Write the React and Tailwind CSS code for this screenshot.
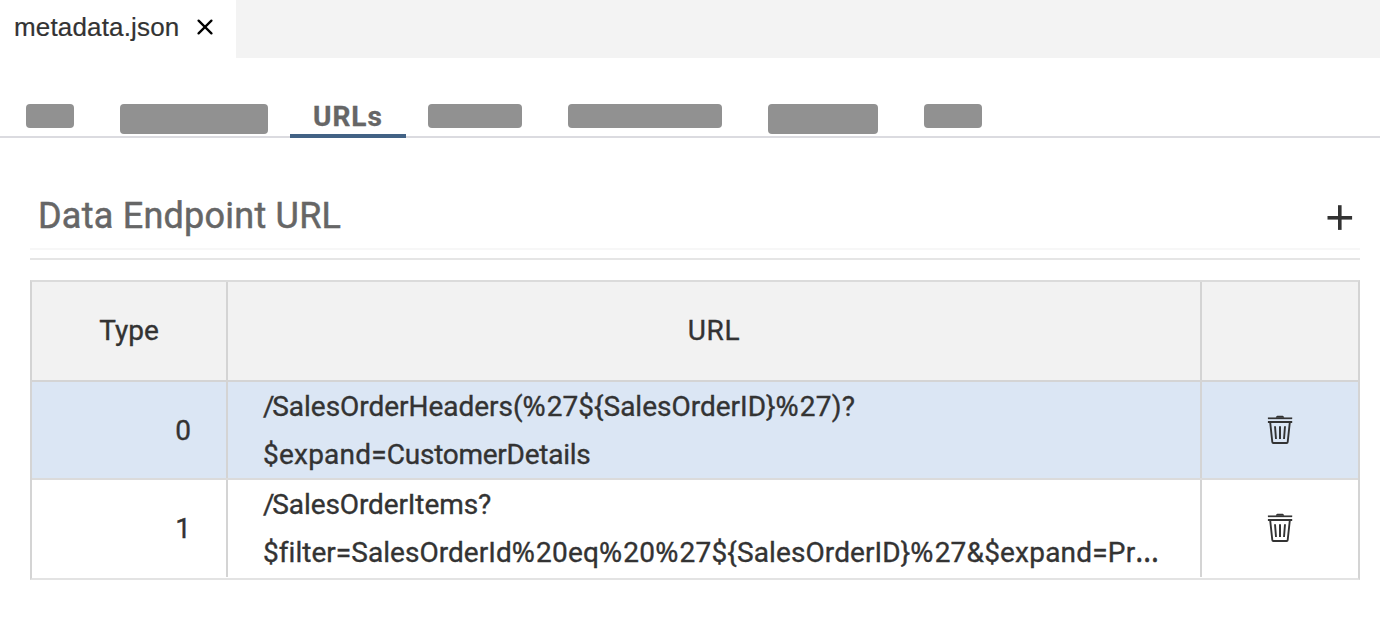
import React from "react";

const percent = { text: "%", cls: "font-['Noto_Sans',sans-serif] leading-none tracking-[1px]" };

const rows = [
  {
    type: "0",
    selected: true,
    lines: [
      [
        { text: "/", cls: "tracking-[-2.3px]" },
        { text: "SalesOrderHeaders(", cls: "tracking-[-0.03px]" },
        percent,
        { text: "27${" },
        { text: "SalesOrderID}", cls: "tracking-[0px]" },
        percent,
        { text: "27)?", cls: "tracking-[0.2px]" },
      ],
      [
        { text: "$expand=", cls: "tracking-[0.22px]" },
        { text: "CustomerDetails", cls: "tracking-[-0.26px]" },
      ],
    ],
  },
  {
    type: "1",
    selected: false,
    lines: [
      [
        { text: "/", cls: "tracking-[-2.3px]" },
        { text: "SalesOrderItems?", cls: "tracking-[-0.1px]" },
      ],
      [
        { text: "$filter=SalesOrderId", cls: "tracking-[0.04px]" },
        percent,
        { text: "20eq", cls: "tracking-[0.2px]" },
        percent,
        { text: "20", cls: "tracking-[0.2px]" },
        percent,
        { text: "27${", cls: "tracking-[0.2px]" },
        { text: "SalesOrderID}", cls: "tracking-[0.1px]" },
        percent,
        { text: "27&$expand=Pr", cls: "tracking-[0.2px]" },
        { text: "…", cls: "font-['Noto_Sans',sans-serif] text-[30px] leading-none" },
      ],
    ],
  },
];

function CloseIcon() {
  return (
    <svg width="16" height="16" viewBox="0 0 16 16" fill="none" stroke="#000" strokeWidth="2.3" strokeLinecap="round">
      <path d="M1.6 1.6 14.4 14.4M14.4 1.6 1.6 14.4" />
    </svg>
  );
}

function PlusIcon() {
  return (
    <svg width="26" height="26" viewBox="0 0 26 26" fill="#333">
      <path d="M0.500 11h24.600v3.600H0.500z" />
      <path d="M11 0.200h3.600v24.700H11z" />
    </svg>
  );
}

function TrashIcon() {
  return (
    <svg width="26" height="30" viewBox="0 0 26 30" fill="none" stroke="#333">
      <path d="M8.8 2.8C9 1.2 10 .7 11 .7h4c1 0 2 .5 2.200 2.100z" fill="#333" stroke="none" />
      <path d="M0.900 3.300h24.300" strokeWidth="1.700" />
      <path d="M0.900 7h24.300" strokeWidth="2" />
      <path d="M3.200 7.500 5.300 27Q5.400 28 6.300 28H19.700Q20.600 28 20.700 27L22.800 7.500" strokeWidth="1.900" />
      <path d="M8 11.300 9 24M18 11.300 17 24" strokeWidth="1.900" />
      <path d="M13 11.300V24" strokeWidth="2" />
    </svg>
  );
}

export default function App() {
  return (
    <div className="h-[634px] w-[1380px] overflow-hidden bg-white font-['Roboto',sans-serif] text-[#333]">
      <header className="flex h-[58px] bg-[#f3f3f3]">
        <div className="flex w-[236px] items-start bg-white pl-[14px]">
          <span className="w-[183px] whitespace-nowrap pt-[9px] font-['Liberation_Sans',sans-serif] text-[26px] leading-9 tracking-[0.16px] [-webkit-text-stroke:0.2px]">
            metadata.json
          </span>
          <button className="mt-[19px]" aria-label="Close">
            <CloseIcon />
          </button>
        </div>
      </header>

      <nav className="flex h-20 items-start border-b-2 border-[#dbdbe0] pl-[26px] pt-[46px]">
        <div className="h-6 w-12 rounded-[4px] bg-[#919191]" />
        <div className="ml-[46px] h-[30px] w-[148px] rounded-[4px] bg-[#919191]" />
        <div className="-mt-1 ml-[22px] h-[38px] w-[116px] border-b-4 border-[#426285] pl-[23px] text-[28px] font-bold leading-[34px] tracking-[0.95px] text-[#666] [-webkit-text-stroke:0.3px]">
          URLs
        </div>
        <div className="ml-[22px] h-6 w-[94px] rounded-[4px] bg-[#919191]" />
        <div className="ml-[46px] h-6 w-[154px] rounded-[4px] bg-[#919191]" />
        <div className="ml-[46px] h-[30px] w-[110px] rounded-[4px] bg-[#919191]" />
        <div className="ml-[46px] h-6 w-[58px] rounded-[4px] bg-[#919191]" />
      </nav>

      <main className="pl-[30px] pr-5">
        <div className="flex h-[112px] items-start justify-between border-b-2 border-[#f7f7f7] pl-2 pr-[7px]">
          <h1 className="pt-[54px] text-[36px] leading-[48px] tracking-[0.24px] text-[#666] [-webkit-text-stroke:0.5px]">
            Data Endpoint URL
          </h1>
          <button className="mt-[67px]" aria-label="Add">
            <PlusIcon />
          </button>
        </div>
        <div className="h-[10px] border-b-2 border-[#e5e5e5]" />

        <div className="mt-5 flex h-[300px] flex-col border-2 border-b-[#e3e3e3] border-l-[#d4d4d4] border-r-[#d4d4d4] border-t-[#dbdbdb] text-[28px] [-webkit-text-stroke:0.35px]">
          <div className="flex h-[100px] border-b-2 border-[#d4d4d4] bg-[#f2f2f2]">
            <div className="flex w-[196px] items-center justify-center border-r-2 border-[#d4d4d4]">Type</div>
            <div className="flex w-[974px] items-center justify-center border-r-2 border-[#d4d4d4] tracking-[0.6px]">
              URL
            </div>
            <div className="flex-1" />
          </div>
          {rows.map((row) => (
            <div
              key={row.type}
              className={row.selected ? "flex h-[98px] border-b-2 border-[#dbdbdb] bg-[#dbe6f4]" : "flex h-[98px] bg-white pb-px"}
            >
              <div className="flex w-[196px] items-start justify-end border-r-2 border-[#d4d4d4] pr-[35px] pt-[25px] leading-[48px]">
                {row.type}
              </div>
              <div className="w-[974px] border-r-2 border-[#d4d4d4] pl-[35px] pt-px">
                {row.lines.map((line, i) => (
                  <div key={i} className="h-12 whitespace-nowrap leading-[48px]">
                    {line.map((part, j) => (
                      <span key={j} className={part.cls}>
                        {part.text}
                      </span>
                    ))}
                  </div>
                ))}
              </div>
              <div className="flex flex-1 items-start justify-center pt-[33px]">
                <TrashIcon />
              </div>
            </div>
          ))}
        </div>
      </main>
    </div>
  );
}
